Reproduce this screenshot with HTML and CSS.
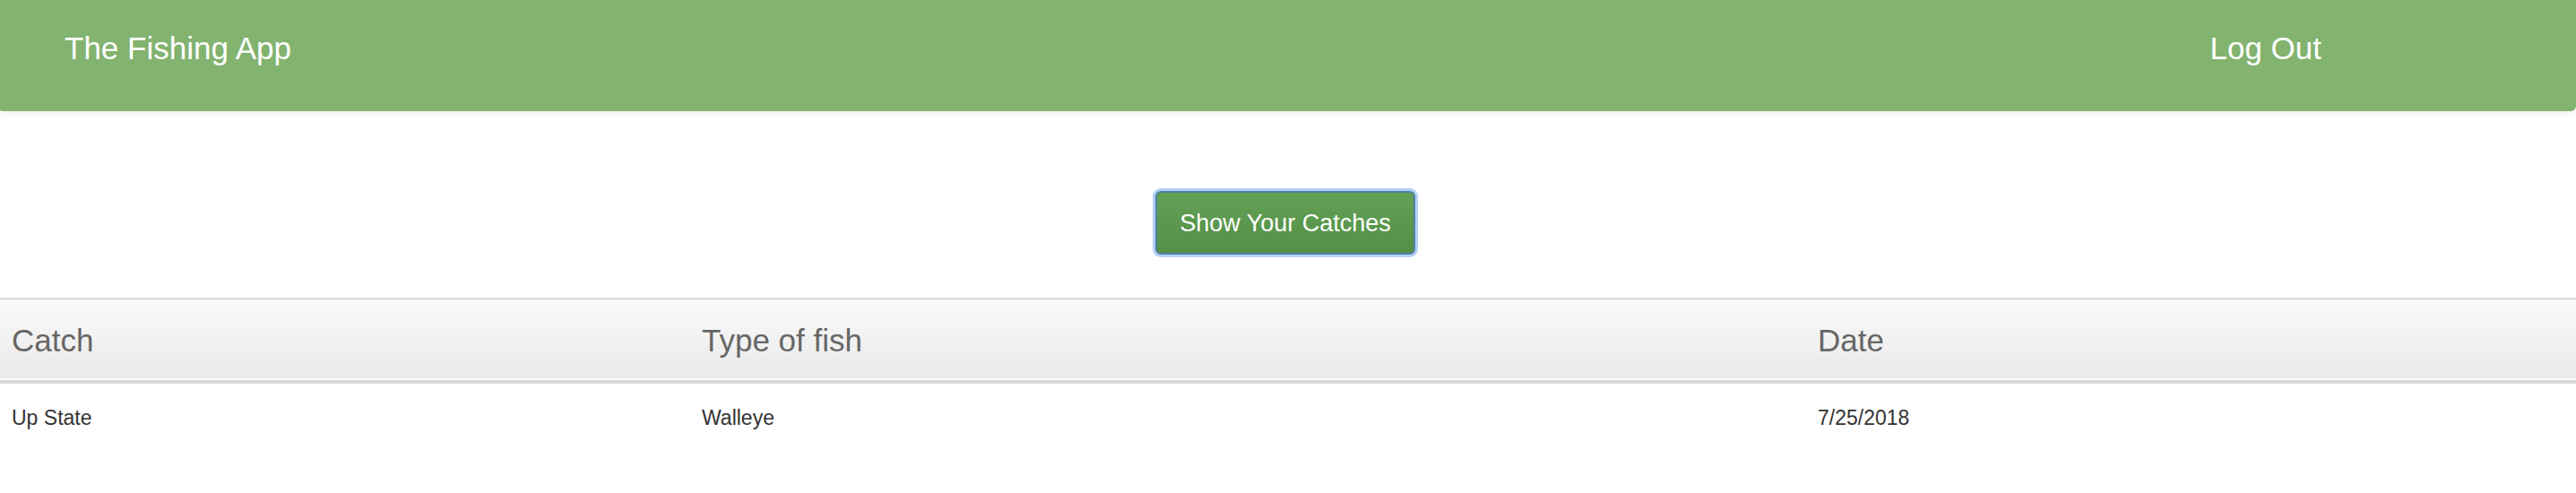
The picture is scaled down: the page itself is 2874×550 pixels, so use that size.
FILE: index.html
```html
<!DOCTYPE html>
<html>
<head>
<meta charset="utf-8">
<title>The Fishing App</title>
<link rel="stylesheet" href="styles.css">
</head>
<body>
<nav class="navbar">
  <span class="brand">The Fishing App</span>
  <span class="logout">Log Out</span>
</nav>
<div class="actions">
  <button class="btn-show">Show Your Catches</button>
</div>
<table class="catches">
  <colgroup>
    <col class="c1"><col class="c2"><col class="c3">
  </colgroup>
  <thead>
    <tr><th>Catch</th><th>Type of fish</th><th>Date</th></tr>
  </thead>
  <tbody>
    <tr><td>Up State</td><td>Walleye</td><td>7/25/2018</td></tr>
  </tbody>
</table>
</body>
</html>
```
FILE: styles.css
```css
html, body {
  margin: 0;
  padding: 0;
  background: #ffffff;
  font-family: "Liberation Sans", Arial, Helvetica, sans-serif;
}

.navbar {
  height: 124px;
  box-sizing: border-box;
  background: #82b36f;
  border-radius: 0 0 6px 2px;
  box-shadow: 0 2px 8px rgba(0, 0, 0, 0.08);
  display: flex;
  justify-content: space-between;
  align-items: flex-start;
  padding: 36px 284px 0 72px;
  color: #ffffff;
  font-size: 35px;
  line-height: 35px;
}

.actions {
  display: flex;
  justify-content: center;
  padding: 89px 0 48px 0;
}

.btn-show {
  font-family: "Liberation Sans", Arial, Helvetica, sans-serif;
  font-size: 27px;
  line-height: 37px;
  color: #ffffff;
  padding: 16px 25px 14px 25px;
  border: 2px solid #4d82a6;
  border-radius: 6px;
  background: linear-gradient(to bottom, #63a156 0%, #548f45 100%);
  box-shadow: 0 0 0 3px rgba(120, 170, 240, 0.55);
  margin-left: -6px;
}

.catches {
  width: 100%;
  border-collapse: collapse;
  table-layout: fixed;
}

.c1 { width: 770px; }
.c2 { width: 1245px; }
.c3 { width: 859px; }

.catches thead tr {
  background: linear-gradient(to bottom, #fafafa 0%, #e9e9e9 100%);
  border-top: 2px solid #dddddd;
  border-bottom: 4px solid #dadada;
}

.catches th {
  text-align: left;
  font-weight: normal;
  font-size: 35px;
  line-height: 40px;
  color: #666666;
  padding: 26px 13px 24px 13px;
}

.catches td {
  font-size: 23px;
  line-height: 32px;
  color: #333333;
  padding: 22px 13px 22px 13px;
}
```
